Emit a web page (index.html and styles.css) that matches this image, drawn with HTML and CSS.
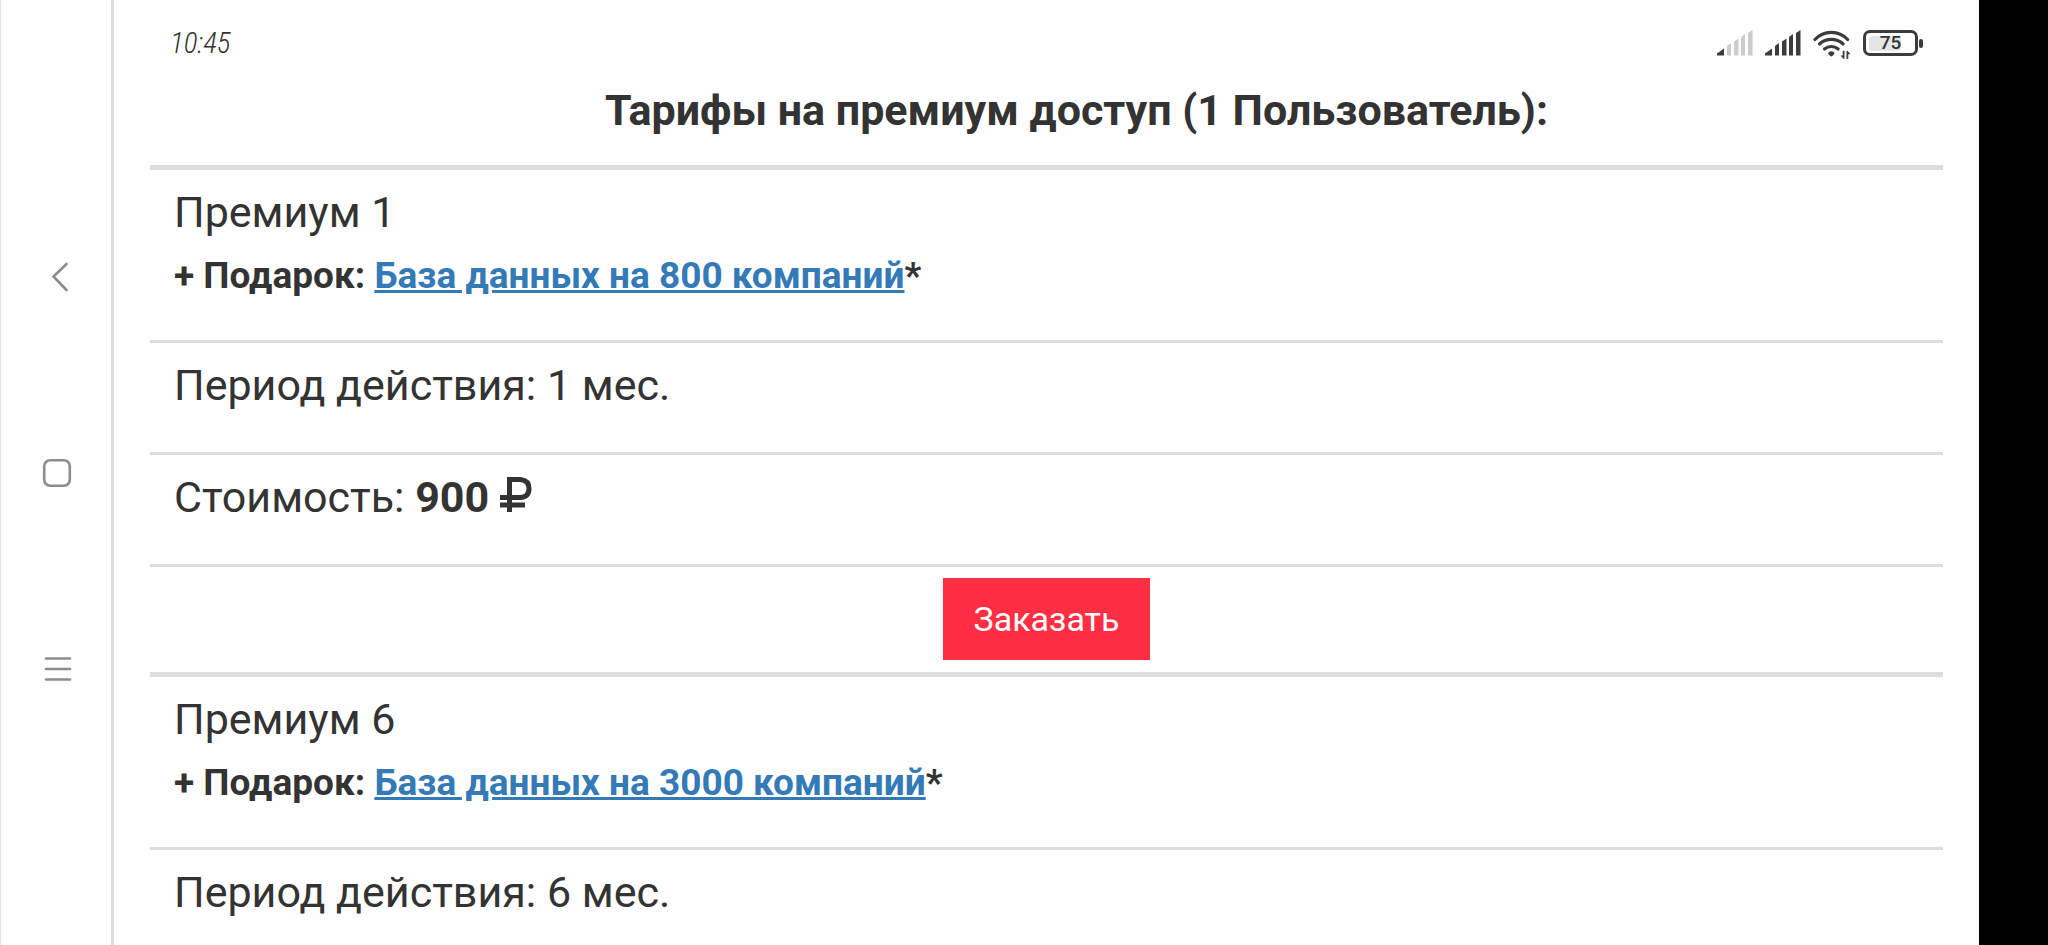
FILE: index.html
```html
<!DOCTYPE html>
<html lang="ru">
<head>
<meta charset="utf-8">
<meta name="viewport" content="width=device-width, initial-scale=1">
<title>Тарифы на премиум доступ</title>
<link rel="stylesheet" href="styles.css">
</head>
<body>
<div class="screen">
  <nav class="sysnav" aria-label="Системная навигация">
    <button class="sysnav-btn" type="button" aria-label="Назад">
      <svg viewBox="0 0 30 30"><path d="M24.500 2 11.500 14.500 24.500 28"/></svg>
    </button>
    <button class="sysnav-btn" type="button" aria-label="Домой">
      <svg viewBox="0 0 30 30"><rect x="2.200" y="2.200" width="25.600" height="25.600" rx="6"/></svg>
    </button>
    <button class="sysnav-btn" type="button" aria-label="Меню">
      <svg viewBox="0 0 30 30"><path d="M4 4.500h24M4 15h24M4 25.500h24"/></svg>
    </button>
  </nav>

  <div class="view">
    <header class="status">
      <time class="clock">10:45</time>
      <div class="indicators">
        <svg class="signal" viewBox="0 0 36 26">
          <path d="M0 25.500V23.500L7 18.500v7z"/>
          <path class="dim" d="M10 16l4-3v12.500h-4zM17 11.500l4.500-3v17H17zM24 7l4-3v21.500h-4zM31 3l4.500-3v25.500H31z"/>
        </svg>
        <svg class="signal" viewBox="0 0 36 26">
          <path d="M0 25.500V23.500L7 18.500v7zM10 16l4-3v12.500h-4zM17 11.500l4.500-3v17H17zM24 7l4-3v21.500h-4zM31 3l4.500-3v25.500H31z"/>
        </svg>
        <svg class="wifi" viewBox="0 0 38 30">
          <g class="arcs">
            <path d="M2 9.500A22 22 0 0 1 34.600 9.500"/>
            <path d="M6.500 14A17.500 17.500 0 0 1 30.100 14"/>
            <path d="M11.500 19A10.500 10.500 0 0 1 25.100 19"/>
          </g>
          <path d="M15.500 22.500q2.800-2.500 5.600 0 .8 1-.2 2l-1.600 1.500q-1 .8-2 0l-1.600-1.500q-1-1-.2-2z"/>
          <path d="M31.500 20.800v8h-1.200L27.500 25.500h2.200v-4.700zM33.500 29v-8h1.200l2.800 3.300h-2.200V29z"/>
        </svg>
        <div class="battery" role="img" aria-label="Заряд 75">
          <div class="battery-case"><span class="battery-level"></span><span class="battery-text">75</span></div>
          <div class="battery-tip"></div>
        </div>
      </div>
    </header>

    <main class="page">
      <h1 class="title">Тарифы на премиум доступ (1 Пользователь):</h1>

      <section class="plan">
        <div class="row row-name">
          <p class="name">Премиум 1</p>
          <p class="gift">+ Подарок: <a class="link" href="#base800">База данных на 800 компаний</a>*</p>
        </div>
        <div class="row">Период действия: 1 мес.</div>
        <div class="row">Стоимость: <b>900 <svg class="ruble" viewBox="0 0 32 35" role="img" aria-label="₽"><path d="M9.500 35V2.500H20.500Q29 3.500 29 11.500 29 20 20.500 20.500H0M0 28H25"/></svg></b></div>
        <div class="row row-action"><button class="order" type="button">Заказать</button></div>
      </section>

      <section class="plan">
        <div class="row row-name">
          <p class="name">Премиум 6</p>
          <p class="gift">+ Подарок: <a class="link" href="#base3000">База данных на 3000 компаний</a>*</p>
        </div>
        <div class="row">Период действия: 6 мес.</div>
      </section>
    </main>
  </div>

  <div class="cutout"></div>
</div>
</body>
</html>
```
FILE: styles.css
```css
* { box-sizing: border-box; }

body {
  margin: 0;
  background: #fefefe;
  color: #333;
  font-family: Roboto, "Liberation Sans", sans-serif;
  font-size: 43px;
  line-height: 64px;
}

p, h1 { margin: 0; }

.screen {
  display: flex;
  height: 100vh;
  overflow: hidden;
}

/* System navigation rail */
.sysnav {
  flex: none;
  display: flex;
  flex-direction: column;
  align-items: center;
  justify-content: center;
  gap: 166px;
  width: 114px;
  padding-left: 2px;
  border-left: 1px solid #e2e2e2;
  border-right: 3px solid #ddd;
}

.sysnav-btn {
  width: 30px;
  height: 30px;
  padding: 0;
  border: 0;
  background: none;
}

.sysnav-btn svg {
  display: block;
  fill: none;
  stroke: #8c8c8c;
  stroke-width: 2.6;
  stroke-linecap: round;
}

.view {
  flex: 1;
  min-width: 0;
  overflow: auto;
  scrollbar-width: none;
}

/* Black strip beside the camera */
.cutout {
  flex: none;
  width: 69px;
  background: #000;
}

/* Status bar */
.status {
  display: flex;
  align-items: center;
  justify-content: space-between;
  height: 78px;
  padding: 8px 56px 0;
}

.clock {
  font-family: "Liberation Sans Narrow", "Roboto Condensed", "Open Sans Condensed", Lato, sans-serif;
  font-size: 29px;
  font-style: italic;
  font-weight: 300;
}

.indicators {
  display: flex;
  align-items: center;
  gap: 12px;
  fill: #3c3c3c;
}

.signal { width: 36px; height: 26px; }
.dim { fill: #ccc; }
.wifi { width: 38px; height: 30px; margin-top: 4px; }

.arcs {
  fill: none;
  stroke: #3c3c3c;
  stroke-width: 3.2;
  stroke-linecap: round;
}

.battery {
  display: flex;
  align-items: center;
  gap: 1px;
}

.battery-case {
  display: grid;
  align-items: center;
  width: 55px;
  height: 26px;
  padding: 0 3px;
  border: 3px solid #3c3c3c;
  border-radius: 7px;
}

.battery-level,
.battery-text { grid-area: 1 / 1; }

.battery-level {
  width: 75%;
  height: 15px;
  border-radius: 3px;
  background: #e5e5e5;
}

.battery-text {
  text-align: center;
  font-size: 19px;
  font-weight: 500;
  line-height: 20px;
}

.battery-tip {
  width: 4px;
  height: 9px;
  border-radius: 2px;
  background: #3c3c3c;
}

/* Price list */
.page { padding: 0 36px; }

.title {
  padding: 0 0 23px 60px;
  font-size: 43px;
  font-weight: 700;
  text-align: center;
}

.row {
  padding: 10px 24px 35px;
  border-top: 3px solid #ddd;
}

.row-name {
  padding-bottom: 32px;
  border-top-width: 5px;
}

.gift {
  font-size: 37px;
  font-weight: 700;
}

.link {
  color: #337ab7;
  text-decoration: underline;
}

.ruble {
  width: 32px;
  height: 35px;
  fill: none;
  stroke: #333;
  stroke-width: 5;
}

.row-action {
  display: flex;
  justify-content: center;
  padding: 11px 24px 12px;
}

.order {
  padding: 9px 31px;
  border: 0;
  background: #ff2e43;
  color: #fff;
  font: inherit;
  font-size: 34px;
}
```
